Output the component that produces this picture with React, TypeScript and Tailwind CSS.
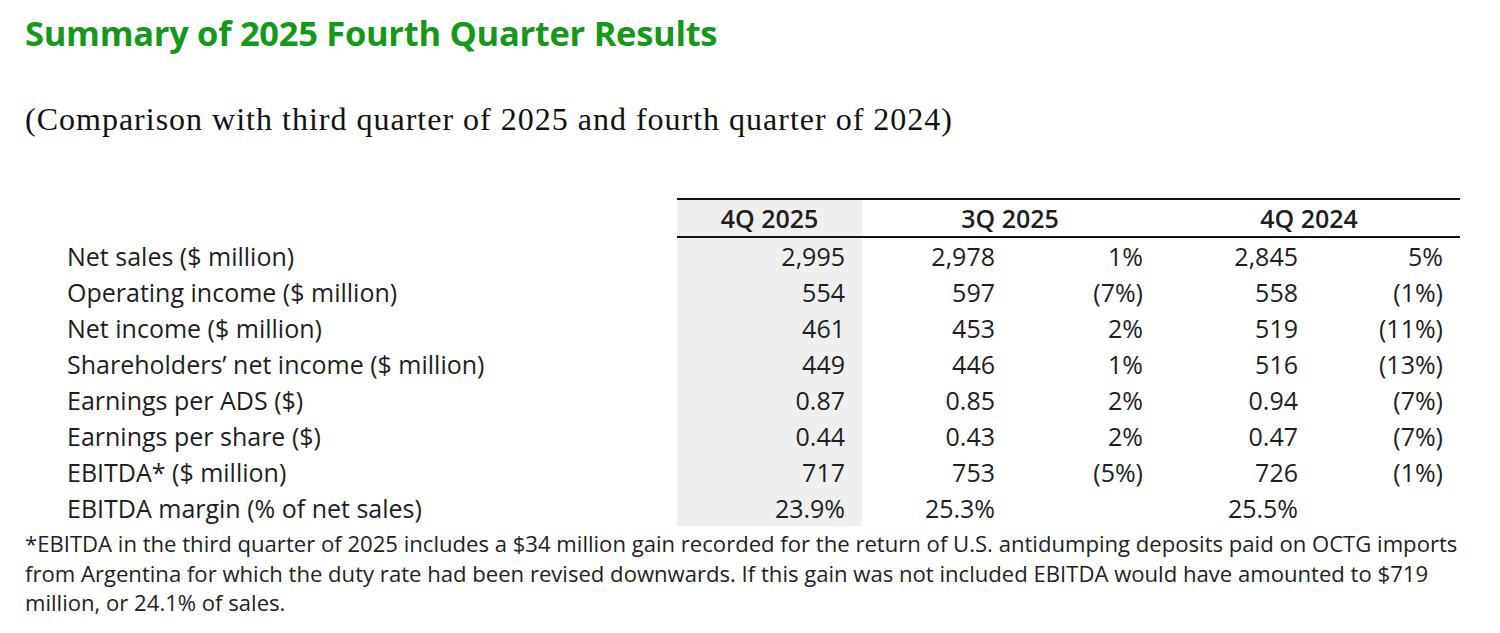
import React from "react";

const rows: [string, string, string, string, string, string][] = [
  ["Net sales ($ million)", "2,995", "2,978", "1%", "2,845", "5%"],
  ["Operating income ($ million)", "554", "597", "(7%)", "558", "(1%)"],
  ["Net income ($ million)", "461", "453", "2%", "519", "(11%)"],
  ["Shareholders\u2019 net income ($ million)", "449", "446", "1%", "516", "(13%)"],
  ["Earnings per ADS ($)", "0.87", "0.85", "2%", "0.94", "(7%)"],
  ["Earnings per share ($)", "0.44", "0.43", "2%", "0.47", "(7%)"],
  ["EBITDA* ($ million)", "717", "753", "(5%)", "726", "(1%)"],
  ["EBITDA margin (% of net sales)", "23.9%", "25.3%", "", "25.5%", ""],
];

export default function App() {
  return (
    <div className="w-[1500px] h-[633px] bg-white overflow-hidden text-[#1e1e1e] font-['Open_Sans',sans-serif]">
      <div className="pl-[25px] pt-[13px]">
        <h1 className="text-[34.5px] leading-[40px] font-bold text-[#14991a] tracking-[-0.3px]">
          Summary of 2025 Fourth Quarter Results
        </h1>
        <p className="mt-[48px] text-[32px] leading-[36px] tracking-[1px] font-['Liberation_Serif',serif] text-[#111]">
          (Comparison with third quarter of 2025 and fourth quarter of 2024)
        </p>
      </div>

      <div className="mt-[61px] pl-[67px] grid grid-cols-[610px_185px_148px_148px_155px_147px] text-[25px] leading-[36px]">
        <div />
        <div className="col-span-5 grid grid-cols-[185px_296px_302px] border-t-2 border-b-2 border-[#111] h-[40px] items-center leading-[36px] text-[25px] font-semibold">
          <div className="bg-[#efefef] text-center h-full">4Q 2025</div>
          <div className="text-center">3Q 2025</div>
          <div className="text-center">4Q 2024</div>
        </div>
        {rows.map((r, i) => (
          <React.Fragment key={i}>
            <div className="whitespace-nowrap">{r[0]}</div>
            <div className="bg-[#efefef] text-right pr-[17px]">{r[1]}</div>
            <div className="text-right pr-[15px]">{r[2]}</div>
            <div className="text-right pr-[15px]">{r[3]}</div>
            <div className="text-right pr-[15px]">{r[4]}</div>
            <div className="text-right pr-[17px]">{r[5]}</div>
          </React.Fragment>
        ))}
      </div>

      <div className="pl-[25px] pt-[3px] text-[22.1px] leading-[29.5px] whitespace-nowrap text-[#222]">
        <div>*EBITDA in the third quarter of 2025 includes a $34 million gain recorded for the return of U.S. antidumping deposits paid on OCTG imports</div>
        <div>from Argentina for which the duty rate had been revised downwards. If this gain was not included EBITDA would have amounted to $719</div>
        <div>million, or 24.1% of sales.</div>
      </div>
    </div>
  );
}
